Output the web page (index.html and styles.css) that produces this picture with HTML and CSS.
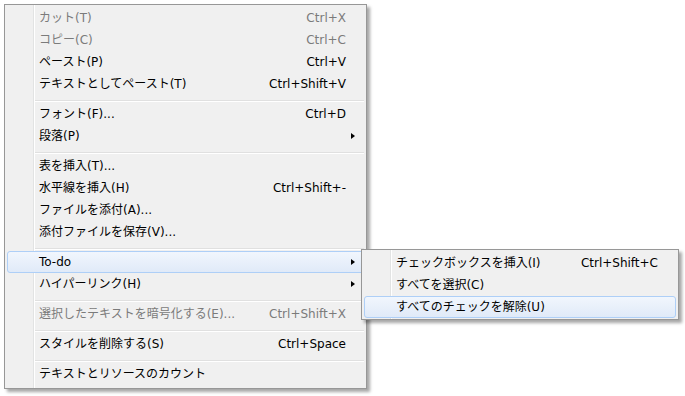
FILE: index.html
```html
<!DOCTYPE html>
<html lang="ja">
<head>
<meta charset="utf-8">
<link rel="stylesheet" href="styles.css">
</head>
<body>
<div class="menu main">
  <div class="item dis"><span class="label">カット(T)</span><span class="key">Ctrl+X</span></div>
  <div class="item dis"><span class="label">コピー(C)</span><span class="key">Ctrl+C</span></div>
  <div class="item"><span class="label">ペースト(P)</span><span class="key">Ctrl+V</span></div>
  <div class="item"><span class="label">テキストとしてペースト(T)</span><span class="key">Ctrl+Shift+V</span></div>
  <div class="sep"></div>
  <div class="item"><span class="label">フォント(F)...</span><span class="key">Ctrl+D</span></div>
  <div class="item"><span class="label">段落(P)</span><span class="arrow"></span></div>
  <div class="sep"></div>
  <div class="item"><span class="label">表を挿入(T)...</span></div>
  <div class="item"><span class="label">水平線を挿入(H)</span><span class="key">Ctrl+Shift+-</span></div>
  <div class="item"><span class="label">ファイルを添付(A)...</span></div>
  <div class="item"><span class="label">添付ファイルを保存(V)...</span></div>
  <div class="sep"></div>
  <div class="item hl"><span class="label">To-do</span><span class="arrow"></span></div>
  <div class="item"><span class="label">ハイパーリンク(H)</span><span class="arrow"></span></div>
  <div class="sep"></div>
  <div class="item dis"><span class="label">選択したテキストを暗号化する(E)...</span><span class="key">Ctrl+Shift+X</span></div>
  <div class="sep"></div>
  <div class="item"><span class="label">スタイルを削除する(S)</span><span class="key">Ctrl+Space</span></div>
  <div class="sep"></div>
  <div class="item"><span class="label">テキストとリソースのカウント</span></div>
</div>
<div class="menu sub">
  <div class="item"><span class="label">チェックボックスを挿入(I)</span><span class="key">Ctrl+Shift+C</span></div>
  <div class="item"><span class="label">すべてを選択(C)</span></div>
  <div class="item hl"><span class="label">すべてのチェックを解除(U)</span></div>
</div>
</body>
</html>
```

FILE: styles.css
```css
html, body {
  margin: 0;
  padding: 0;
  background: #ffffff;
}

body {
  font-family: "DejaVu Sans", "Noto Sans CJK JP", sans-serif;
  font-size: 12px;
  color: #000;
  position: relative;
  width: 685px;
  height: 396px;
  overflow: hidden;
}

.menu {
  box-sizing: border-box;
  border: 1px solid #979797;
  background-color: #f0f0f0;
  background-image: linear-gradient(to right,
    transparent 28px, #e2e3e3 28px, #e2e3e3 29px,
    #ffffff 29px, #ffffff 30px, transparent 30px);
  box-shadow: 3px 3px 3px rgba(0, 0, 0, 0.35);
}

.main {
  margin: 4px 0 0 4px;
  width: 363px;
  padding: 2px 2px 3px 2px;
}

.sub {
  position: absolute;
  left: 361px;
  top: 249px;
  width: 318px;
  padding: 2px 2px 1px 2px;
}

.item {
  box-sizing: border-box;
  height: 22px;
  line-height: 22px;
  display: flex;
  align-items: center;
  padding: 0 8px 0 31px;
  border: 1px solid transparent;
  border-radius: 3px;
  white-space: nowrap;
}

.label {
  flex: 1;
}

.key {
  margin-right: 9px;
}

.sub .item {
  padding-right: 17px;
}

.sub .key {
  margin-right: 0;
}

.dis {
  color: #7b7b7b;
}

.hl {
  border-color: #aecff7;
  background: linear-gradient(to bottom, #f1f6fd, #e0eaf8);
}

.arrow {
  width: 0;
  height: 0;
  border-left: 4px solid #000;
  border-top: 3.5px solid transparent;
  border-bottom: 3.5px solid transparent;
}

.sep {
  height: 8px;
  margin-left: 28px;
  background: linear-gradient(to bottom,
    transparent 5px, #e0e0e0 5px, #e0e0e0 6px,
    #ffffff 6px, #ffffff 7px, transparent 7px);
}
```
